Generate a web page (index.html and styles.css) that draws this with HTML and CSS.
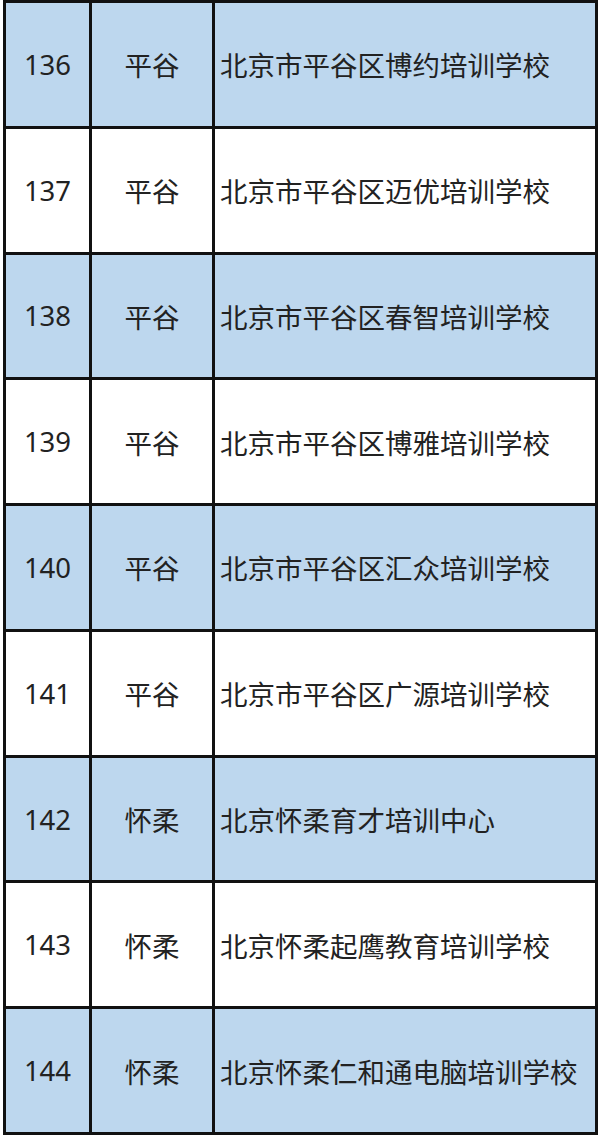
FILE: index.html
```html
<!DOCTYPE html>
<html lang="zh-CN">
<head>
<meta charset="utf-8">
<title>培训学校名单</title>
<link rel="stylesheet" href="styles.css">
</head>
<body>
<div class="table">
  <div class="cell num blue">136</div><div class="cell dist blue">平谷</div><div class="cell name blue">北京市平谷区博约培训学校</div>
  <div class="cell num">137</div><div class="cell dist">平谷</div><div class="cell name">北京市平谷区迈优培训学校</div>
  <div class="cell num blue">138</div><div class="cell dist blue">平谷</div><div class="cell name blue">北京市平谷区春智培训学校</div>
  <div class="cell num">139</div><div class="cell dist">平谷</div><div class="cell name">北京市平谷区博雅培训学校</div>
  <div class="cell num blue">140</div><div class="cell dist blue">平谷</div><div class="cell name blue">北京市平谷区汇众培训学校</div>
  <div class="cell num">141</div><div class="cell dist">平谷</div><div class="cell name">北京市平谷区广源培训学校</div>
  <div class="cell num blue">142</div><div class="cell dist blue">怀柔</div><div class="cell name blue">北京怀柔育才培训中心</div>
  <div class="cell num">143</div><div class="cell dist">怀柔</div><div class="cell name">北京怀柔起鹰教育培训学校</div>
  <div class="cell num blue">144</div><div class="cell dist blue">怀柔</div><div class="cell name blue">北京怀柔仁和通电脑培训学校</div>
</div>
</body>
</html>
```

FILE: styles.css
```css
html, body {
  margin: 0;
  padding: 0;
  background: #ffffff;
}

.table {
  margin-left: 3px;
  width: 595px;
  height: 1135px;
  box-sizing: border-box;
  padding: 3px;
  background: #111111;
  display: grid;
  grid-template-columns: 83px 120px 380px;
  grid-template-rows: repeat(9, 1fr);
  gap: 3px;
}

.cell {
  background: #ffffff;
  display: flex;
  align-items: center;
  font-family: "Noto Sans", "Noto Sans CJK SC", sans-serif;
  font-size: 27.5px;
  color: #222222;
}

.cell.blue {
  background: #bdd7ee;
}

.num,
.dist {
  justify-content: center;
}

.name {
  padding-left: 5px;
}
```
